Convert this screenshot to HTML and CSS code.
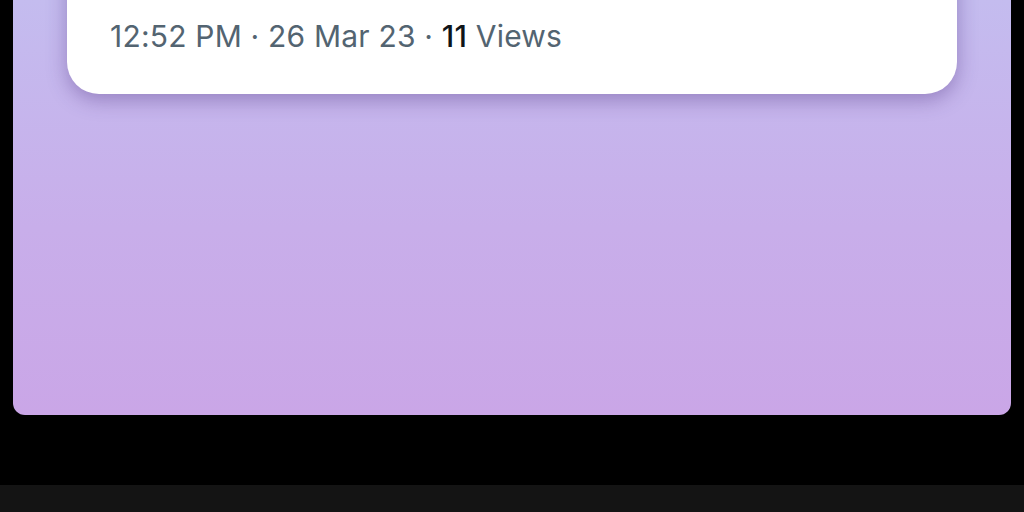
FILE: index.html
```html
<!DOCTYPE html>
<html>
<head>
<meta charset="utf-8">
<link rel="stylesheet" href="styles.css">
</head>
<body>
<div class="panel">
  <div class="card">
    <p class="meta">12:52 PM · 26 Mar 23 · <span class="count">11</span> Views</p>
  </div>
</div>
<div class="strip"></div>
</body>
</html>
```
FILE: styles.css
```css
html, body {
  margin: 0;
  padding: 0;
  background: #000;
  width: 1024px;
  height: 512px;
  overflow: hidden;
}
.panel {
  margin: 0 13px;
  height: 415px;
  box-sizing: border-box;
  padding: 0 54px;
  border-radius: 0 0 12px 12px;
  background: linear-gradient(180deg, #c4bcef 0%, #c8aeea 55%, #caa6e7 100%);
  overflow: hidden;
}
.card {
  margin-top: -40px;
  height: 134px;
  box-sizing: border-box;
  padding: 58px 43px 0;
  background: #fff;
  border-radius: 0 0 32px 32px;
  box-shadow: 0 6px 20px rgba(60, 30, 110, 0.35);
}
.meta {
  margin: 0;
  font-family: Inter, "Noto Sans", sans-serif;
  font-size: 30px;
  line-height: 36px;
  color: #536471;
  letter-spacing: 0.2px;
}
.count {
  color: #0f1419;
  font-weight: 500;
}
.strip {
  margin-top: 70px;
  height: 27px;
  background: #141414;
}
```
